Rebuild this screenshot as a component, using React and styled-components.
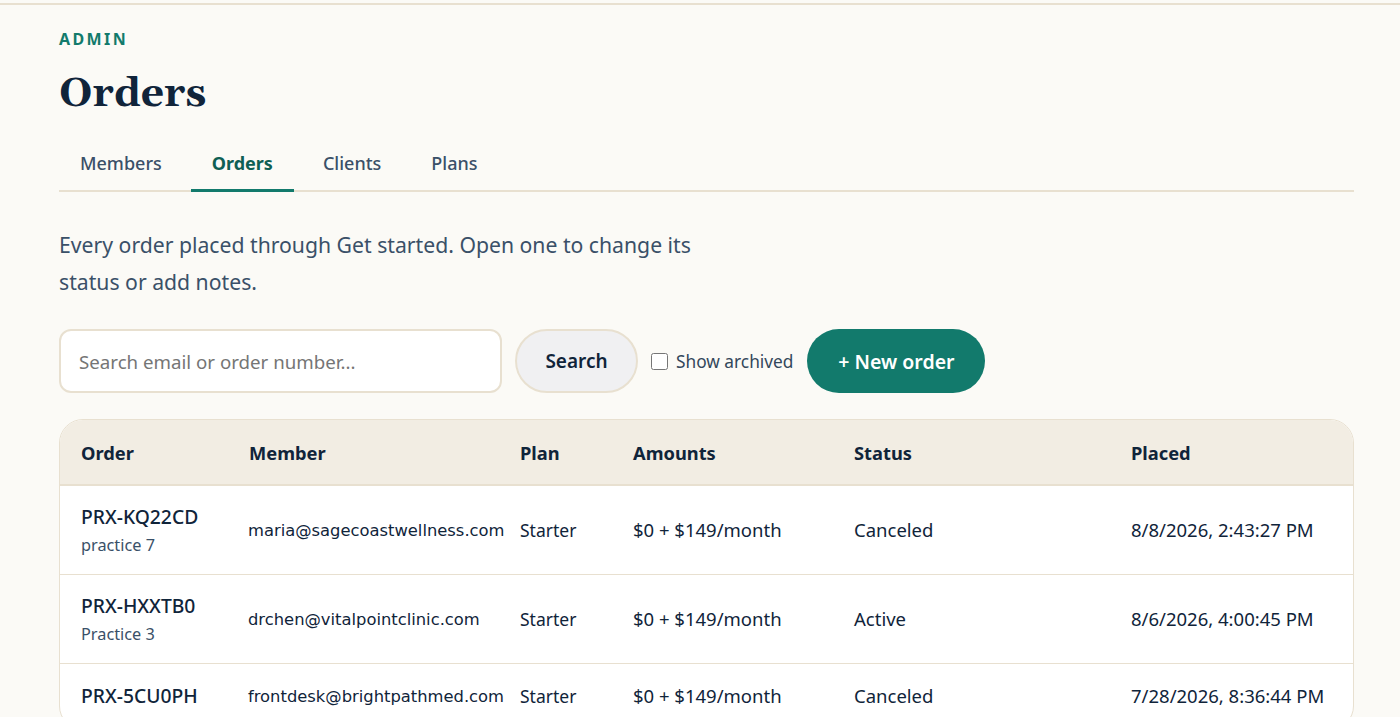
import React from "react";
import styled, { createGlobalStyle } from "styled-components";

const rows = [
  { id: "PRX-KQ22CD", note: "practice 7", email: "maria@sagecoastwellness.com", plan: "Starter", amounts: "$0 + $149/month", status: "Canceled", placed: "8/8/2026, 2:43:27 PM" },
  { id: "PRX-HXXTB0", note: "Practice 3", email: "drchen@vitalpointclinic.com", plan: "Starter", amounts: "$0 + $149/month", status: "Active", placed: "8/6/2026, 4:00:45 PM" },
  { id: "PRX-5CU0PH", email: "frontdesk@brightpathmed.com", plan: "Starter", amounts: "$0 + $149/month", status: "Canceled", placed: "7/28/2026, 8:36:44 PM" },
];

const tabs = ["Members", "Orders", "Clients", "Plans"];
const columns = [
  { label: "Order", width: 168 },
  { label: "Member", width: 271 },
  { label: "Plan", width: 113 },
  { label: "Amounts", width: 221 },
  { label: "Status", width: 277 },
  { label: "Placed" },
];

export default function App() {
  return (
    <>
      <GlobalStyle />
      <TopRule />
      <Page>
        <Eyebrow>ADMIN</Eyebrow>
        <Title>Orders</Title>
        <Tabs>
          {tabs.map((tab) => (
            <Tab key={tab} $active={tab === "Orders"}>{tab}</Tab>
          ))}
        </Tabs>
        <Intro>Every order placed through Get started. Open one to change its status or add notes.</Intro>
        <Toolbar>
          <SearchInput placeholder="Search email or order number..." />
          <SearchButton>Search</SearchButton>
          <ArchivedLabel>
            <input type="checkbox" />
            Show archived
          </ArchivedLabel>
          <NewButton>+ New order</NewButton>
        </Toolbar>
        <TableCard>
          <Table>
            <colgroup>
              {columns.map((col) => (
                <Col key={col.label} $width={col.width} />
              ))}
            </colgroup>
            <thead>
              <tr>
                {columns.map((col) => (
                  <Th key={col.label}>{col.label}</Th>
                ))}
              </tr>
            </thead>
            <tbody>
              {rows.map((row) => (
                <tr key={row.id}>
                  <Td>
                    <OrderId>{row.id}</OrderId>
                    {row.note && <OrderNote>{row.note}</OrderNote>}
                  </Td>
                  <Td><Email>{row.email}</Email></Td>
                  <PlanCell>{row.plan}</PlanCell>
                  <Td>{row.amounts}</Td>
                  <Td>{row.status}</Td>
                  <Td>{row.placed}</Td>
                </tr>
              ))}
            </tbody>
          </Table>
        </TableCard>
      </Page>
    </>
  );
}

const GlobalStyle = createGlobalStyle`
  html, body {
    margin: 0;
    background: #fbfaf6;
  }
  body {
    padding-top: 3px;
    font-family: "Noto Sans", sans-serif;
    color: #10243a;
  }
`;

const TopRule = styled.div`
  height: 2px;
  background: #e8e0d0;
`;

const Page = styled.main`
  padding: 23px 46px 40px 59px;
`;

const Eyebrow = styled.div`
  font-size: 16px;
  line-height: 22px;
  font-weight: 700;
  letter-spacing: 2.4px;
  color: #127a6c;
`;

const Title = styled.h1`
  margin: 19px 0 0;
  font-family: Gelasio, "Noto Serif", serif;
  font-size: 40.8px;
  line-height: 50px;
  font-weight: 700;
  color: #10243a;
`;

const Tabs = styled.nav`
  display: flex;
  gap: 8px;
  margin-top: 20px;
  border-bottom: 2px solid #e8e0d0;
`;

const Tab = styled.a`
  padding: 12px 21px 14px;
  margin-bottom: -2px;
  font-size: 18px;
  line-height: 24px;
  font-weight: ${(p) => (p.$active ? 700 : 500)};
  color: ${(p) => (p.$active ? "#0e5f54" : "#3a5068")};
  border-bottom: 3px solid ${(p) => (p.$active ? "#127a6c" : "transparent")};
`;

const Intro = styled.p`
  margin: 34px 0 0;
  max-width: 680px;
  font-size: 21.2px;
  line-height: 37px;
  color: #3a5068;
`;

const Toolbar = styled.div`
  display: flex;
  align-items: center;
  gap: 13px;
  margin-top: 29px;
`;

const SearchInput = styled.input`
  box-sizing: border-box;
  width: 443px;
  height: 64px;
  padding: 0 18px;
  border: 2px solid #e8e0d0;
  border-radius: 12px;
  background: #fff;
  font-family: inherit;
  font-size: 18.7px;
  color: #10243a;
  &::placeholder {
    color: #757575;
  }
`;

const SearchButton = styled.button`
  box-sizing: border-box;
  width: 123px;
  height: 64px;
  border: 2px solid #e8e0d0;
  border-radius: 32px;
  background: #f0f0f2;
  font-family: inherit;
  font-size: 19px;
  font-weight: 600;
  color: #10243a;
`;

const ArchivedLabel = styled.label`
  display: flex;
  align-items: center;
  gap: 8px;
  margin-right: 1px;
  font-size: 17.3px;
  color: #33475b;
  input {
    width: 17px;
    height: 17px;
    margin: 0;
  }
`;

const NewButton = styled.button`
  box-sizing: border-box;
  width: 178px;
  height: 64px;
  border: none;
  border-radius: 32px;
  background: #127a6c;
  font-family: inherit;
  font-size: 19.5px;
  font-weight: 600;
  color: #fff;
`;

const TableCard = styled.div`
  margin-top: 26px;
  border: 1px solid #e8e0d0;
  border-radius: 24px;
  background: #fff;
  overflow: hidden;
`;

const Table = styled.table`
  width: 100%;
  table-layout: fixed;
  border-collapse: collapse;
`;

const Col = styled.col`
  width: ${(p) => (p.$width ? `${p.$width}px` : "auto")};
`;

const Th = styled.th`
  height: 64px;
  padding: 0 21px;
  background: #f2ede3;
  border-bottom: 2px solid #e8e0d0;
  text-align: left;
  font-size: 18.3px;
  font-weight: 700;
  color: #10243a;
`;

const Td = styled.td`
  padding: 18px 21px;
  border-bottom: 1px solid #e8e0d0;
  font-size: 18.5px;
  line-height: 26px;
  color: #10243a;
  white-space: nowrap;
`;

const PlanCell = styled(Td)`
  font-size: 17.5px;
`;

const OrderId = styled.div`
  font-size: 19.3px;
  font-weight: 500;
`;

const OrderNote = styled.div`
  margin-top: 4px;
  font-size: 16.3px;
  line-height: 22px;
  color: #3a5068;
`;

const Email = styled.span`
  margin-left: -1px;
  font-family: "DejaVu Sans", sans-serif;
  font-size: 16.35px;
`;
